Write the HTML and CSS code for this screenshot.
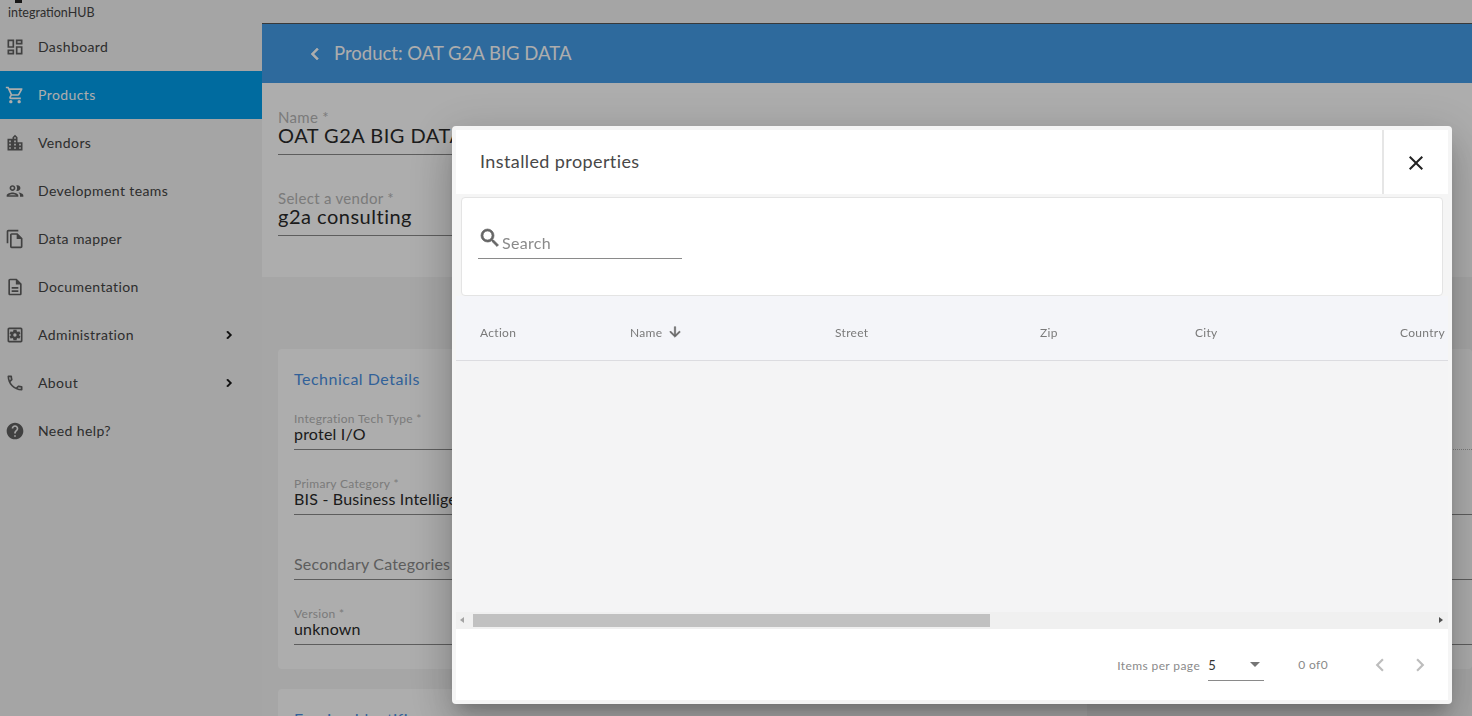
FILE: index.html
```html
<!DOCTYPE html>
<html lang="en">
<head>
  <meta charset="UTF-8">
  <title>integrationHUB</title>
  <link rel="stylesheet" href="styles.css">
</head>
<body>
  <div class="app">
    <!-- Sidebar -->
    <aside class="sidebar">
      <div class="brand">
        <span class="brand-mark"></span>
        <span class="brand-name">integrationHUB</span>
      </div>
      <nav class="nav">
        <a class="nav-item">
          <svg class="nav-icon" viewBox="0 0 24 24"><path d="M19 5v2h-4V5h4M9 5v6H5V5h4m10 8v6h-4v-6h4M9 17v2H5v-2h4M21 3h-8v6h8V3zM11 3H3v10h8V3zm10 8h-8v10h8V11zm-10 4H3v6h8v-6z"/></svg>
          <span>Dashboard</span>
        </a>
        <a class="nav-item active">
          <svg class="nav-icon" viewBox="0 0 24 24"><path d="M15.55 13c.75 0 1.41-.41 1.75-1.03l3.58-6.49A.996.996 0 0 0 20.01 4H5.21l-.94-2H1v2h2l3.6 7.59-1.35 2.44C4.52 15.37 5.48 17 7 17h12v-2H7l1.1-2h7.45zM6.16 6h12.15l-2.76 5H8.53L6.16 6zM7 18c-1.1 0-1.99.9-1.99 2S5.900 22 7 22s2-.9 2-2-.9-2-2-2zm10 0c-1.100 0-1.990.9-1.990 2s.890 2 1.990 2 2-.9 2-2-.9-2-2-2z"/></svg>
          <span>Products</span>
        </a>
        <a class="nav-item">
          <svg class="nav-icon" viewBox="0 0 24 24"><path d="M15 11V5l-3-3-3 3v2H3v14h18V11h-6zm-8 8H5v-2h2v2zm0-4H5v-2h2v2zm0-4H5V9h2v2zm6 8h-2v-2h2v2zm0-4h-2v-2h2v2zm0-4h-2V9h2v2zm0-4h-2V5h2v2zm6 12h-2v-2h2v2zm0-4h-2v-2h2v2z"/></svg>
          <span>Vendors</span>
        </a>
        <a class="nav-item">
          <svg class="nav-icon" viewBox="0 0 24 24"><path d="M9 13.750c-2.340 0-7 1.170-7 3.500V19h14v-1.750c0-2.330-4.660-3.500-7-3.500zM4.340 17c.84-.58 2.870-1.250 4.660-1.250s3.820.67 4.660 1.250H4.340zM9 12c1.930 0 3.500-1.570 3.500-3.500S10.930 5 9 5 5.500 6.570 5.500 8.500 7.070 12 9 12zm0-5c.83 0 1.500.67 1.500 1.500S9.830 10 9 10s-1.500-.67-1.500-1.500S8.170 7 9 7zm7.040 6.810c1.160.84 1.960 1.960 1.960 3.440V19h4v-1.750c0-2.020-3.500-3.170-5.960-3.440zM15 12c1.930 0 3.500-1.570 3.500-3.500S16.930 5 15 5c-.54 0-1.040.13-1.500.35.63.89 1 1.980 1 3.150s-.37 2.260-1 3.150c.46.220.96.350 1.500.350z"/></svg>
          <span>Development teams</span>
        </a>
        <a class="nav-item">
          <svg class="nav-icon" viewBox="0 0 24 24"><path d="M16 1H4c-1.100 0-2 .9-2 2v14h2V3h12V1zm-1 4H8c-1.100 0-1.990.9-1.990 2L6 21c0 1.100.89 2 1.990 2H19c1.100 0 2-.9 2-2V11l-6-6zM8 21V7h6v5h5v9H8z"/></svg>
          <span>Data mapper</span>
        </a>
        <a class="nav-item">
          <svg class="nav-icon" viewBox="0 0 24 24"><path d="M8 16h8v2H8zm0-4h8v2H8zm6-10H6c-1.100 0-2 .9-2 2v16c0 1.100.89 2 1.990 2H18c1.100 0 2-.9 2-2V8l-6-6zm4 18H6V4h7v5h5v11z"/></svg>
          <span>Documentation</span>
        </a>
        <a class="nav-item">
          <svg class="nav-icon" viewBox="0 0 24 24">
            <path d="M19 3H5c-1.100 0-2 .9-2 2v14c0 1.100.9 2 2 2h14c1.100 0 2-.9 2-2V5c0-1.100-.9-2-2-2zm0 16H5V5h14v14z"/>
            <path fill-rule="evenodd" d="M17.250 12c0 .23-.02.46-.05.68l1.480 1.160-1.500 2.590-1.740-.7c-.36.28-.76.51-1.180.69L14 18.300h-3.800l-.26-1.880c-.43-.18-.82-.41-1.180-.69l-1.740.7-1.500-2.590 1.480-1.160c-.03-.22-.05-.45-.05-.68s.02-.46.05-.68L5.520 10.160l1.500-2.590 1.740.7c.36-.28.76-.51 1.180-.69l.26-1.880H14l.26 1.880c.43.18.82.41 1.180.69l1.740-.7 1.500 2.590-1.480 1.160c.03.22.05.45.05.68zM12 10a2 2 0 1 0 0 4 2 2 0 0 0 0-4z" transform="translate(-.1 0)"/>
          </svg>
          <span>Administration</span>
          <svg class="nav-arrow" viewBox="0 0 24 24"><path d="M10 6 8.590 7.410 13.170 12l-4.580 4.590L10 18l6-6z"/></svg>
        </a>
        <a class="nav-item">
          <svg class="nav-icon" viewBox="0 0 24 24"><path d="M6.540 5c.06.89.21 1.760.45 2.590l-1.200 1.200c-.41-1.200-.67-2.470-.76-3.790h1.510m9.860 12.020c.85.240 1.720.390 2.600.450v1.490c-1.320-.09-2.590-.35-3.800-.75l1.200-1.190M7.500 3H4c-.55 0-1 .45-1 1 0 9.390 7.610 17 17 17 .55 0 1-.45 1-1v-3.490c0-.55-.45-1-1-1-1.240 0-2.450-.2-3.570-.57-.1-.04-.21-.05-.31-.05-.26 0-.51.1-.71.29l-2.200 2.200c-2.830-1.450-5.150-3.760-6.590-6.590l2.200-2.200c.28-.28.36-.67.25-1.020C8.700 6.450 8.500 5.250 8.500 4c0-.55-.45-1-1-1z"/></svg>
          <span>About</span>
          <svg class="nav-arrow" viewBox="0 0 24 24"><path d="M10 6 8.590 7.410 13.170 12l-4.580 4.590L10 18l6-6z"/></svg>
        </a>
        <a class="nav-item">
          <svg class="nav-icon" viewBox="0 0 24 24"><path d="M12 2C6.480 2 2 6.480 2 12s4.480 10 10 10 10-4.480 10-10S17.520 2 12 2zm1 17h-2v-2h2v2zm2.070-7.750-.9.920C13.450 12.900 13 13.500 13 15h-2v-.5c0-1.100.45-2.100 1.170-2.830l1.240-1.260c.37-.36.590-.86.590-1.410 0-1.100-.9-2-2-2s-2 .9-2 2H8c0-2.210 1.790-4 4-4s4 1.790 4 4c0 .88-.36 1.680-.93 2.250z"/></svg>
          <span>Need help?</span>
        </a>
      </nav>
    </aside>

    <!-- Main content behind the dialog -->
    <main class="main">
      <div class="topbar"></div>
      <header class="page-head">
        <svg class="back-icon" viewBox="0 0 24 24"><path d="M15.410 7.410 14 6l-6 6 6 6 1.410-1.410L10.830 12z"/></svg>
        <h1>Product: OAT G2A BIG DATA</h1>
      </header>
      <section class="basics">
        <div class="field field-large">
          <label>Name *</label>
          <div class="value">OAT G2A BIG DATA</div>
        </div>
        <div class="field field-large">
          <label>Select a vendor *</label>
          <div class="value">g2a consulting</div>
        </div>
      </section>
      <div class="columns">
        <div class="column-left">
          <section class="card card-tech">
            <h2>Technical Details</h2>
            <div class="field">
              <label>Integration Tech Type *</label>
              <div class="value">protel I/O</div>
            </div>
            <div class="field">
              <label>Primary Category *</label>
              <div class="value">BIS - Business Intelligence</div>
            </div>
            <div class="field field-empty">
              <div class="value placeholder">Secondary Categories</div>
            </div>
            <div class="field">
              <label>Version *</label>
              <div class="value">unknown</div>
            </div>
          </section>
          <section class="card">
            <h2>Foreign Identifiers</h2>
          </section>
        </div>
        <div class="column-right">
          <section class="card card-side">
            <div class="side-line side-dotted"></div>
            <div class="side-line"></div>
            <div class="side-line"></div>
            <div class="side-line"></div>
          </section>
        </div>
      </div>
    </main>
  </div>

  <!-- Dialog -->
  <div class="backdrop"></div>
  <div class="dialog">
    <div class="dialog-inner">
      <div class="dialog-head">
        <div class="dialog-title">Installed properties</div>
        <button class="dialog-close">
          <svg viewBox="0 0 24 24"><path d="M19 6.410 17.590 5 12 10.590 6.410 5 5 6.410 10.590 12 5 17.590 6.410 19 12 13.410 17.590 19 19 17.590 13.410 12z"/></svg>
        </button>
      </div>
      <div class="search-card">
        <div class="search-box">
          <svg viewBox="0 0 24 24"><path d="M15.500 14h-.79l-.28-.27A6.470 6.470 0 0 0 16 9.500 6.500 6.500 0 1 0 9.500 16c1.610 0 3.090-.59 4.230-1.570l.27.28v.79l5 4.990L20.490 19l-4.990-5zm-6 0C7.010 14 5 11.990 5 9.500S7.010 5 9.500 5 14 7.010 14 9.500 11.990 14 9.500 14z"/></svg>
          <span>Search</span>
        </div>
      </div>
      <div class="table-head">
        <div class="th th-action">Action</div>
        <div class="th th-name">Name
          <svg viewBox="0 0 24 24"><path d="m20 12-1.410-1.410L13 16.170V4h-2v12.170l-5.580-5.590L4 12l8 8 8-8z"/></svg>
        </div>
        <div class="th th-street">Street</div>
        <div class="th th-zip">Zip</div>
        <div class="th th-city">City</div>
        <div class="th th-country">Country</div>
      </div>
      <div class="table-body"></div>
      <div class="scrollbar">
        <span class="arrow-left"></span>
        <div class="scroll-track"><div class="scroll-thumb"></div></div>
        <span class="arrow-right"></span>
      </div>
      <div class="paginator">
        <span class="per-page-label">Items per page</span>
        <div class="per-page-select">
          <span>5</span>
          <i class="select-caret"></i>
        </div>
        <span class="range">0 of0</span>
        <svg class="page-btn" viewBox="0 0 24 24"><path d="M15.410 7.410 14 6l-6 6 6 6 1.410-1.410L10.830 12z"/></svg>
        <svg class="page-btn" viewBox="0 0 24 24"><path d="M10 6 8.590 7.410 13.170 12l-4.580 4.590L10 18l6-6z"/></svg>
      </div>
    </div>
  </div>
</body>
</html>
```

FILE: styles.css
```css
/* integrationHUB product page, with the dialog open */
* {
  box-sizing: border-box;
}
html, body {
  margin: 0;
  height: 716px;
  overflow: hidden;
}
body {
  background-color: #f5f5f5;
  font-family: Lato, "Open Sans", sans-serif;
  color: #2a2a2a;
}
.app {
  display: flex;
  height: 716px;
  overflow: hidden;
}

/* Sidebar */
.sidebar {
  width: 262px;
  flex: none;
  background-color: #f3f3f3;
}
.brand {
  height: 23px;
  position: relative;
  padding-left: 8px;
}
.brand-mark {
  position: absolute;
  left: 15px;
  top: 0;
  width: 7px;
  height: 3px;
  background-color: #222;
}
.brand-name {
  display: block;
  padding-top: 5px;
  font-size: 12.5px;
  line-height: 16px;
  color: #444;
}
.nav-item {
  display: flex;
  align-items: center;
  height: 48px;
  padding-left: 5px;
  font-size: 14px;
  letter-spacing: .4px;
  color: #444;
}
.nav-item span {
  margin-top: -2px;
}
.nav-item.active {
  background-color: #009eea;
  color: #fff;
}
.nav-item.active .nav-icon {
  fill: #fff;
}
.nav-icon {
  width: 20px;
  height: 20px;
  margin-right: 13px;
  fill: #616161;
  flex: none;
}
.nav-arrow {
  width: 16px;
  height: 16px;
  margin-left: auto;
  margin-right: 25px;
  fill: #111;
  stroke: #111;
  stroke-width: 1;
}

/* Main column */
.main {
  flex: 1;
  min-width: 0;
  background: #f5f5f5;
}
.topbar {
  height: 24px;
  background-color: #f3f3f3;
  border-bottom: 1px solid #555;
}
.page-head {
  display: flex;
  align-items: center;
  height: 59px;
  padding-left: 41px;
  background-color: #449ce8;
  color: #fff;
}
.back-icon {
  width: 24px;
  height: 24px;
  fill: #fff;
  stroke: #fff;
  stroke-width: .6;
  margin-right: 7px;
}
.page-head h1 {
  margin: -2px 0 0;
  font-size: 18.5px;
  font-weight: 400;
}
.basics {
  height: 194px;
  padding: 27px 16px 0;
  background-color: #fff;
}
.field {
  border-bottom: 1px solid #8a8a8a;
  margin-bottom: 28px;
  height: 37px;
}
.field label {
  display: block;
  font-size: 12px;
  line-height: 12px;
  color: #b5b5b5;
  letter-spacing: .3px;
}
.field .value {
  font-size: 16px;
  line-height: 18px;
  letter-spacing: .2px;
}
.field-large {
  width: 900px;
  height: 45px;
  margin-bottom: 36px;
}
.field-large label {
  font-size: 15px;
  line-height: 14px;
}
.field-large .value {
  font-size: 20px;
  line-height: 22px;
  letter-spacing: .5px;
}
.field-empty {
  padding-top: 12px;
}
.field .placeholder {
  color: #8a8a8a;
}
.columns {
  display: flex;
  gap: 16px;
  padding: 72px 0 0 16px;
}
.column-left {
  width: 809px;
  flex: none;
}
.column-right {
  flex: 1;
}
.card {
  background-color: #fff;
  border-radius: 4px;
  padding: 20px 16px;
  margin-bottom: 20px;
}
.card h2 {
  margin: 0 0 24px;
  font-size: 16px;
  line-height: 20px;
  font-weight: 400;
  color: #4a90e2;
  letter-spacing: .5px;
}
.card-tech {
  height: 320px;
}
.card-side {
  height: 320px;
  padding: 100px 0 0;
}
.side-line {
  height: 65px;
  border-bottom: 1px solid #8a8a8a;
}
.side-dotted {
  height: 1px;
  border-bottom: 1px dotted #b5b5b5;
}

/* Dialog */
.backdrop {
  position: fixed;
  inset: 0;
  background-color: rgba(0, 0, 0, .32);
}
.dialog {
  position: fixed;
  left: 452px;
  top: 126px;
  width: 1000px;
  height: 578px;
  padding: 4px;
  background-color: #f5f5f5;
  border-radius: 4px;
  box-shadow: 0 11px 15px -7px rgba(0,0,0,.2), 0 24px 38px 3px rgba(0,0,0,.14), 0 9px 46px 8px rgba(0,0,0,.12);
}
.dialog-inner {
  display: flex;
  flex-direction: column;
  height: 570px;
}
.dialog-head {
  display: flex;
  height: 64px;
  background-color: #fff;
}
.dialog-title {
  flex: 1;
  padding: 21px 0 0 24px;
  font-size: 18px;
  line-height: 20px;
  letter-spacing: .4px;
  color: #484848;
}
.dialog-close {
  width: 66px;
  padding: 2px 0 0;
  border: 0;
  border-left: 2px solid #e6e6e6;
  background: #fff;
}
.dialog-close svg {
  display: block;
  width: 24px;
  height: 24px;
  margin: 0 auto;
  fill: #222;
}
.search-card {
  height: 99px;
  margin: 3px 5px 0;
  padding: 26px 16px 0;
  background-color: #fff;
  border: 1px solid #e4e4e4;
  border-radius: 4px;
}
.search-box {
  display: flex;
  width: 204px;
  height: 35px;
  border-bottom: 1px solid #8a8a8a;
  color: #8a8a8a;
  font-size: 16px;
  letter-spacing: .3px;
}
.search-box svg {
  width: 24px;
  height: 24px;
  fill: #666;
  stroke: #666;
  stroke-width: .7;
  margin-top: 2px;
}
.search-box span {
  padding-top: 9px;
}
.table-head {
  display: flex;
  align-items: center;
  height: 65px;
  padding-top: 8px;
  overflow: hidden;
  background-color: #f4f5f9;
  border-bottom: 1px solid #dcdce0;
  font-size: 12px;
  letter-spacing: .3px;
  color: #7a7a7a;
}
.th {
  flex: none;
  display: flex;
  align-items: center;
}
.th-action { width: 150px; margin-left: 24px; }
.th-name { width: 205px; }
.th-street { width: 205px; }
.th-zip { width: 155px; }
.th-city { width: 205px; }
.th-name svg {
  width: 16px;
  height: 16px;
  margin-left: 5px;
  fill: #666;
  stroke: #666;
  stroke-width: .8;
}
.table-body {
  flex: 1;
  background-color: #f4f4f5;
}
.scrollbar {
  display: flex;
  align-items: center;
  height: 17px;
  background-color: #f0f0f0;
}
.arrow-left, .arrow-right {
  flex: none;
  width: 17px;
  height: 17px;
  position: relative;
}
.arrow-left::before, .arrow-right::before {
  content: "";
  position: absolute;
  top: 5px;
  border-style: solid;
  border-color: transparent;
  border-width: 3.500px 4px;
}
.arrow-left::before {
  left: 0;
  border-right-color: #a3a3a3;
}
.arrow-right::before {
  left: 8px;
  border-left-color: #505050;
}
.scroll-track {
  flex: 1;
  height: 13px;
}
.scroll-thumb {
  width: 517px;
  height: 13px;
  background-color: #c1c1c1;
}
.paginator {
  display: flex;
  align-items: center;
  height: 71px;
  padding-right: 15px;
  justify-content: flex-end;
  background-color: #fff;
  font-size: 12px;
  letter-spacing: .4px;
  color: #8a8a8a;
}
.per-page-label {
  margin-top: 2px;
}
.per-page-select {
  position: relative;
  width: 56px;
  height: 30px;
  margin: 2px 34px 0 8px;
  padding-top: 6px;
  border-bottom: 1px solid #8a8a8a;
  font-size: 13px;
  color: #333;
}
.select-caret {
  position: absolute;
  right: 4px;
  top: 11px;
  border-style: solid;
  border-color: #757575 transparent transparent;
  border-width: 5px 5px 0;
}
.range {
  margin-right: 39px;
}
.page-btn {
  width: 26px;
  height: 26px;
  margin-left: 14px;
  fill: #bdbdbd;
}
.range + .page-btn {
  margin-left: 0;
}
```
